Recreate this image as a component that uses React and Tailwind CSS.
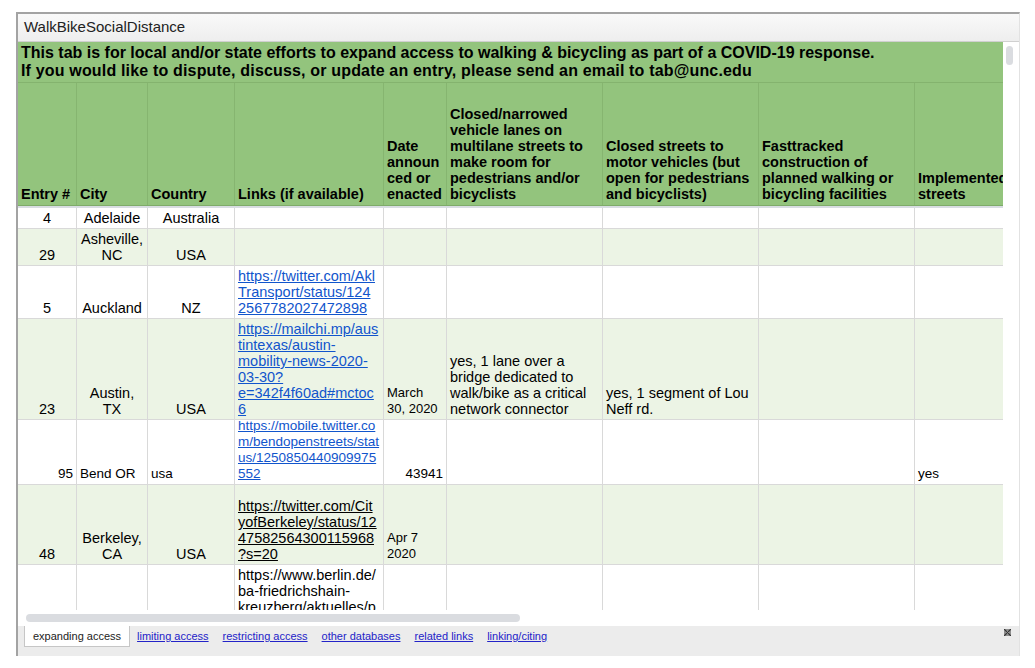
import React from "react";

const cols = [
  "w-[59px]",
  "w-[71px]",
  "w-[87px]",
  "w-[149px]",
  "w-[63px]",
  "w-[156px]",
  "w-[156px]",
  "w-[156px]",
  "w-[156px]",
];

const headers = [
  ["Entry #"],
  ["City"],
  ["Country"],
  ["Links (if available)"],
  ["Date", "announ", "ced or", "enacted"],
  ["Closed/narrowed", "vehicle lanes on", "multilane streets to", "make room for", "pedestrians and/or", "bicyclists"],
  ["Closed streets to", "motor vehicles (but", "open for pedestrians", "and bicyclists)"],
  ["Fasttracked", "construction of", "planned walking or", "bicycling facilities"],
  ["Implemented", "streets"],
];

const LINK = "text-[#1155cc] underline";
const BLACKLINK = "text-black underline";
const SM = "text-[13px]";
const MD = "text-[13.5px]";

const rows = [
  {
    h: "h-[21px]",
    bg: "bg-white",
    cells: [
      { l: ["4"], a: "text-center" },
      { l: ["Adelaide"], a: "text-center" },
      { l: ["Australia"], a: "text-center" },
    ],
  },
  {
    h: "h-[37px]",
    bg: "bg-[#ecf4e5]",
    cells: [
      { l: ["29"], a: "text-center" },
      { l: ["Asheville,", "NC"], a: "text-center" },
      { l: ["USA"], a: "text-center" },
    ],
  },
  {
    h: "h-[53px]",
    bg: "bg-white",
    cells: [
      { l: ["5"], a: "text-center" },
      { l: ["Auckland"], a: "text-center" },
      { l: ["NZ"], a: "text-center" },
      { l: ["https://twitter.com/Akl", "Transport/status/124", "2567782027472898"], a: "text-left", c: LINK },
    ],
  },
  {
    h: "h-[101px]",
    bg: "bg-[#ecf4e5]",
    cells: [
      { l: ["23"], a: "text-center" },
      { l: ["Austin,", "TX"], a: "text-center" },
      { l: ["USA"], a: "text-center" },
      {
        l: ["https://mailchi.mp/aus", "tintexas/austin-", "mobility-news-2020-", "03-30?", "e=342f4f60ad#mctoc", "6"],
        a: "text-left",
        c: LINK,
      },
      { l: ["March", "30, 2020"], a: "text-left", c: SM },
      { l: ["yes, 1 lane over a", "bridge dedicated to", "walk/bike as a critical", "network connector"], a: "text-left" },
      { l: ["yes, 1 segment of Lou", "Neff rd."], a: "text-left" },
    ],
  },
  {
    h: "h-[65px]",
    bg: "bg-white",
    cells: [
      { l: ["95"], a: "text-right", c: MD },
      { l: ["Bend OR"], a: "text-left", c: MD },
      { l: ["usa"], a: "text-left", c: MD },
      {
        l: ["https://mobile.twitter.co", "m/bendopenstreets/stat", "us/1250850440909975", "552"],
        a: "text-left",
        c: LINK + " " + MD,
      },
      { l: ["43941"], a: "text-right", c: MD },
      { l: [], a: "text-left" },
      { l: [], a: "text-left" },
      { l: [], a: "text-left" },
      { l: ["yes"], a: "text-left", c: MD },
    ],
  },
  {
    h: "h-[80px]",
    bg: "bg-[#ecf4e5]",
    cells: [
      { l: ["48"], a: "text-center" },
      { l: ["Berkeley,", "CA"], a: "text-center" },
      { l: ["USA"], a: "text-center" },
      {
        l: ["https://twitter.com/Cit", "yofBerkeley/status/12", "47582564300115968", "?s=20"],
        a: "text-left",
        c: BLACKLINK,
      },
      { l: ["Apr 7", "2020"], a: "text-left", c: SM },
    ],
  },
];

function Cell({ w, lines = [], a = "text-left", c = "", top = false }) {
  return (
    <div
      className={`shrink-0 ${w} border-r border-[#d9d9d9] flex flex-col ${
        top ? "justify-start pt-[2px]" : "justify-end pb-[2px]"
      } px-[3px] ${a} ${c}`}
    >
      {lines.map((t, i) => (
        <div key={i} className="whitespace-nowrap leading-[16px]">
          {t}
        </div>
      ))}
    </div>
  );
}

function Row({ h, bg, cells }) {
  return (
    <div className={`flex ${h} ${bg} border-b border-[#d9d9d9] shrink-0`}>
      {cols.map((w, i) => {
        const c = cells[i] || {};
        return <Cell key={i} w={w} lines={c.l} a={c.a} c={c.c} />;
      })}
    </div>
  );
}

export default function App() {
  return (
    <div className="w-[1035px] h-[668px] bg-white pt-[12px] pl-[16px] font-['Liberation_Sans',Arial,sans-serif] text-[14.5px] text-black overflow-hidden">
      <div className="w-[1004px] h-[644px] border-t-2 border-l-2 border-[#a3a3a3] border-r border-r-[#e2e2e2] flex flex-col">
        {/* title bar */}
        <div className="h-[28px] shrink-0 border-b border-[#d0d0d0] bg-linear-to-b from-[#f9f9f9] to-[#eeeeee] pl-[6px] flex items-center text-[15px] text-[#222]">
          WalkBikeSocialDistance
        </div>

        {/* main area */}
        <div className="flex h-[584px] shrink-0">
          <div className="w-[985px] shrink-0 flex flex-col">
            <div className="h-[568px] overflow-hidden flex flex-col">
              {/* banner */}
              <div className="h-[41px] shrink-0 bg-[#93c47d] border-b border-[#84b36e] pl-[3px] pt-[2px] font-bold text-[16px] leading-[18px]">
                <div className="whitespace-nowrap">
                  This tab is for local and/or state efforts to expand access to walking &amp; bicycling as part of a COVID-19 response.
                </div>
                <div className="whitespace-nowrap tracking-[0.17px]">
                  If you would like to dispute, discuss, or update an entry, please send an email to tab@unc.edu
                </div>
              </div>
              {/* header */}
              <div className="flex h-[125px] shrink-0 bg-[#93c47d] border-b-2 border-[#d8dde2]">
                <div className="flex w-full border-b border-[#7eab69]">
                  {cols.map((w, i) => (
                    <div
                      key={i}
                      className={`shrink-0 ${w} border-r border-[#86b570] flex flex-col justify-end px-[3px] pb-[3px] font-bold`}
                    >
                      {headers[i].map((t, j) => (
                        <div key={j} className="whitespace-nowrap leading-[16px]">
                          {t}
                        </div>
                      ))}
                    </div>
                  ))}
                </div>
              </div>
              {/* rows */}
              {rows.map((r, i) => (
                <Row key={i} {...r} />
              ))}
              {/* berlin row (clipped) */}
              <div className="flex h-[200px] shrink-0 bg-white">
                {cols.map((w, i) => (
                  <Cell
                    key={i}
                    w={w}
                    top
                    lines={
                      i === 3
                        ? ["https://www.berlin.de/", "ba-friedrichshain-", "kreuzberg/aktuelles/p", "ressemitteilungen/2020/"]
                        : []
                    }
                  />
                ))}
              </div>
            </div>
            {/* horizontal scrollbar */}
            <div className="h-[16px] shrink-0 bg-white pt-[4px] pl-[8px]">
              <div className="w-[494px] h-[8px] rounded-full bg-[#dadce0]" />
            </div>
          </div>
          {/* vertical scrollbar */}
          <div className="w-[16px] shrink-0 bg-white pt-[4px] pl-[3px]">
            <div className="w-[7px] h-[19px] rounded-full bg-[#dadce0]" />
          </div>
        </div>

        {/* tab bar */}
        <div className="flex-1 bg-[#ececec] flex items-start pl-[6px] text-[11px] relative">
          <div className="h-[21px] px-[8px] bg-white border-l border-r border-b border-[#c6c6c6] flex items-center text-[#222]">
            expanding access
          </div>
          <div className="flex items-center h-[21px] ml-[7px] gap-[14px] text-[#2323c8]">
            <span className="underline">limiting access</span>
            <span className="underline">restricting access</span>
            <span className="underline">other databases</span>
            <span className="underline">related links</span>
            <span className="underline">linking/citing</span>
          </div>
          <svg
            className="absolute right-[8px] top-[3px]"
            width="7"
            height="7"
            viewBox="0 0 7 7"
          >
            <rect x="1" y="1" width="5" height="5" fill="none" stroke="#333" strokeWidth="1" />
            <path d="M0 0 L7 7 M7 0 L0 7" stroke="#333" strokeWidth="1.2" />
          </svg>
        </div>
      </div>
    </div>
  );
}
